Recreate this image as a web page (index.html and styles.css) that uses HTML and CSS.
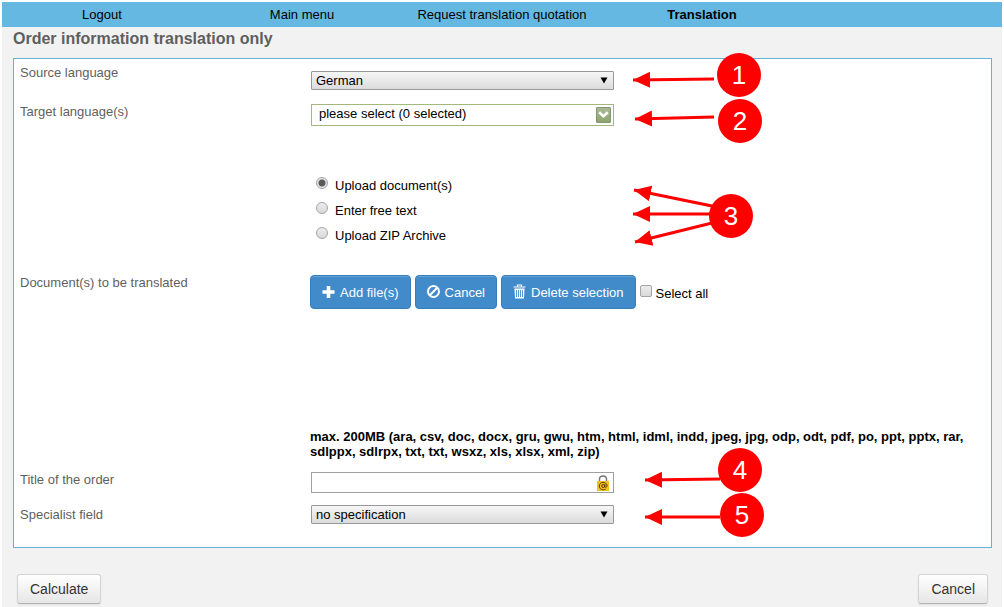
FILE: index.html
```html
<!DOCTYPE html>
<html lang="en">
<head>
    <meta charset="UTF-8">
    <meta name="viewport" content="width=device-width, initial-scale=1.0">
    <title>Order information translation only</title>
    <link rel="stylesheet" href="styles.css">
</head>
<body>
    <div class="page">
        <nav class="menu">
            <a href="#">Logout</a>
            <a href="#">Main menu</a>
            <a href="#">Request translation quotation</a>
            <a href="#" class="active">Translation</a>
        </nav>

        <h1>Order information translation only</h1>

        <form>
            <div class="panel">
                <div class="row row-source">
                    <label class="caption" for="source">Source language</label>
                    <div class="field box">
                        <select id="source">
                            <option>German</option>
                        </select>
                        <svg class="arrow" width="8" height="7" viewBox="0 0 8 7"><path d="M0.5 0.5H7.5L4 6.5Z"/></svg>
                    </div>
                </div>

                <div class="row row-target">
                    <label class="caption" for="target">Target language(s)</label>
                    <div class="field box">
                        <button type="button" id="target" class="multi">
                            <span class="multi-text">please select (0 selected)</span>
                            <span class="multi-icon">
                                <svg width="11" height="8" viewBox="0 0 11 8"><path d="M1.2 1.2L5.5 5.2L9.8 1.2" fill="none" stroke="#fff" stroke-width="2.6"/></svg>
                            </span>
                        </button>
                    </div>
                </div>

                <div class="row row-type">
                    <span class="caption"></span>
                    <div class="field choices">
                        <label><input type="radio" name="type" checked> Upload document(s)</label>
                        <label><input type="radio" name="type"> Enter free text</label>
                        <label><input type="radio" name="type"> Upload ZIP Archive</label>
                    </div>
                </div>

                <div class="row row-docs">
                    <span class="caption">Document(s) to be translated</span>
                    <div class="field">
                        <div class="upload-bar">
                            <button type="button" class="btn-blue">
                                <svg width="13" height="14" viewBox="0 0 13 14"><path d="M4.7 1H8.3V5.2H12.5V8.8H8.3V13H4.7V8.8H0.5V5.2H4.7Z" fill="#fff"/></svg>
                                Add file(s)
                            </button>
                            <button type="button" class="btn-blue">
                                <svg width="13" height="14" viewBox="0 0 13 14"><circle cx="6.5" cy="6.5" r="5.5" fill="none" stroke="#fff" stroke-width="2"/><path d="M2.8 10.2L10.2 2.8" stroke="#fff" stroke-width="2"/></svg>
                                Cancel
                            </button>
                            <button type="button" class="btn-blue">
                                <svg width="13" height="16" viewBox="0 0 13 16"><path d="M4.5 2.5V1H8.5V2.5M0.5 3H12.5" fill="none" stroke="#fff" stroke-width="1.2"/><path d="M1.5 4.5H11.5L11 14.5H2Z" fill="#fff"/><path d="M3.5 6V13M5.5 6V13M7.5 6V13M9.5 6V13" stroke="#428bca" stroke-width="0.9"/></svg>
                                Delete selection
                            </button>
                            <label class="select-all"><input type="checkbox"> <span>Select all</span></label>
                        </div>
                        <p class="note">max. 200MB (ara, csv, doc, docx, gru, gwu, htm, html, idml, indd, jpeg, jpg, odp, odt, pdf, po, ppt, pptx, rar, sdlppx, sdlrpx, txt, txt, wsxz, xls, xlsx, xml, zip)</p>
                    </div>
                </div>

                <div class="row row-title">
                    <label class="caption" for="title">Title of the order</label>
                    <div class="field box">
                        <input type="text" id="title">
                        <svg class="lock" width="12" height="16" viewBox="0 0 12 16">
                            <path d="M2.5 7V4.2C2.5 0 9.5 0 9.5 4.2V7" fill="none" stroke="#777" stroke-width="1.5"/>
                            <rect y="6" width="12" height="10" fill="#f5c21b"/>
                            <circle cx="6.2" cy="11" r="1.5" fill="none" stroke="#4d3b00"/>
                            <path d="M7.9 9.2V11.7C8.4 13 10 12.2 10 10.8C9.8 6.1 2.4 6.2 2.3 11C2.3 14.2 5.6 15.7 8.7 14.1" fill="none" stroke="#4d3b00"/>
                        </svg>
                    </div>
                </div>

                <div class="row">
                    <label class="caption caption-low" for="specialist">Specialist field</label>
                    <div class="field box">
                        <select id="specialist">
                            <option>no specification</option>
                        </select>
                        <svg class="arrow" width="8" height="7" viewBox="0 0 8 7"><path d="M0.5 0.5H7.5L4 6.5Z"/></svg>
                    </div>
                </div>
            </div>

            <div class="actions">
                <button type="submit" class="btn">Calculate</button>
                <button type="button" class="btn">Cancel</button>
            </div>
        </form>
    </div>

    <!-- numbered hints on top of the form -->
    <svg class="hints" width="800" height="560" viewBox="0 0 800 560">
        <defs>
            <marker id="head" markerUnits="userSpaceOnUse" markerWidth="18" markerHeight="18" refX="1" refY="9" orient="auto">
                <path d="M18 1V17L1 9Z" fill="red"/>
            </marker>
        </defs>
        <g class="lines">
            <path d="M633 80L714 79"/>
            <path d="M635 119L714 117"/>
            <path d="M634 190L712 206"/>
            <path d="M633 214H712"/>
            <path d="M635 242L712 223"/>
            <path d="M645 480L720 479"/>
            <path d="M645 517H720"/>
        </g>
        <g fill="red">
            <circle cx="739" cy="75" r="22"/>
            <circle cx="740" cy="121" r="22"/>
            <circle cx="731" cy="216" r="22"/>
            <circle cx="740" cy="470" r="22"/>
            <circle cx="742" cy="515" r="22"/>
        </g>
        <g class="numbers">
            <text x="739" y="84">1</text>
            <text x="740" y="130">2</text>
            <text x="731" y="225">3</text>
            <text x="740" y="479">4</text>
            <text x="742" y="524">5</text>
        </g>
    </svg>
</body>
</html>
```

FILE: styles.css
```css
* {
    box-sizing: border-box;
}
body {
    margin: 0;
    padding: 2px 2px 0;
    background-color: #fff;
    font-family: "Liberation Sans", Arial, sans-serif;
    font-size: 13px;
    line-height: 16px;
    color: #000;
}
button, input, select {
    font-family: inherit;
    font-size: 13px;
    color: #000;
}
.page {
    background-color: #f2f2f2;
}
.menu {
    display: grid;
    grid-template-columns: repeat(5, 1fr);
    background-color: #65b8e1;
}
.menu a {
    padding: 5px 0 4px;
    text-align: center;
    color: #000;
    text-decoration: none;
}
.menu .active {
    font-weight: bold;
}
h1 {
    margin: 0;
    padding: 3px 11px 10px;
    font-size: 16px;
    line-height: 18px;
    color: #5f5f5f;
}
.panel {
    margin: 0 10px 0 11px;
    padding: 6px 6px 23px 5px;
    border: 1px solid #65b3d9;
    background-color: #fff;
}
.row {
    display: grid;
    grid-template-columns: 291px 1fr;
    align-items: start;
}
.caption {
    padding-left: 1px;
    color: #5f5f5f;
}
.caption-low {
    padding-top: 2px;
}
.row-source {
    height: 39px;
}
.row-source .field {
    margin-top: 6px;
}
.row-target {
    height: 69px;
}
.row-type {
    margin-bottom: 27px;
}
.row-docs {
    margin-bottom: 13px;
}
.row-title {
    height: 33px;
}

/* form controls */
.box {
    position: relative;
    width: 303px;
    margin-left: 1px;
}
select {
    display: block;
    width: 100%;
    height: 19px;
    padding: 0 4px;
    border: 1px solid #999;
    border-radius: 1px;
    background: linear-gradient(#f6f6f6, #dcdcdc);
    appearance: none;
}
.arrow {
    position: absolute;
    top: 6px;
    right: 6px;
    pointer-events: none;
}
.multi {
    display: flex;
    justify-content: space-between;
    align-items: center;
    width: 100%;
    height: 22px;
    padding: 0 2px 0 7px;
    border: 1px solid #a3b87e;
    background-color: #fff;
}
.multi-text {
    padding-bottom: 3px;
}
.multi-icon {
    display: flex;
    justify-content: center;
    align-items: center;
    width: 15px;
    height: 16px;
    border: 1px solid #82976d;
    border-radius: 1px;
    background: linear-gradient(#a9b994, #8fa471);
}
input[type="text"] {
    display: block;
    width: 100%;
    height: 21px;
    padding: 0 22px 0 4px;
    border: 1px solid #a0a0a0;
}
.lock {
    position: absolute;
    top: 3px;
    right: 5px;
}
.choices label {
    display: flex;
    height: 25px;
    padding: 5px 6px 0;
    gap: 7px;
}
input[type="radio"], input[type="checkbox"] {
    width: 12px;
    height: 12px;
    margin: 0;
    border: 1px solid #a5a5a5;
    border-radius: 50%;
    background: linear-gradient(#ececec, #d9d9d9);
    appearance: none;
}
.choices input[type="radio"] {
    margin-top: -1px;
}
input[type="radio"]:checked {
    background: radial-gradient(circle, #5a5a5a 3px, #e4e4e4 4px);
}
input[type="checkbox"] {
    border-radius: 2px;
}
.upload-bar {
    display: flex;
    gap: 4px;
    min-height: 154px;
    align-items: flex-start;
}
.btn-blue {
    display: flex;
    align-items: center;
    gap: 5px;
    height: 34px;
    padding: 0 11px;
    border: 1px solid #357ebd;
    border-radius: 4px;
    background-color: #428bca;
    box-shadow: inset 0 1px 0 #65a3d7;
    color: #fff;
}
.select-all {
    display: flex;
    gap: 4px;
    padding-top: 10px;
}
.select-all span {
    padding-top: 1px;
}
.note {
    margin: 0;
    font-weight: bold;
    line-height: 15px;
}
.actions {
    display: flex;
    justify-content: space-between;
    padding: 26px 14px 3px 15px;
}
.btn {
    height: 30px;
    padding: 0 12px;
    border: 1px solid #d4d4d4;
    border-bottom-color: #b3b3b3;
    border-radius: 3px;
    background: linear-gradient(#fff, #e6e6e6);
    box-shadow: 0 1px 2px rgba(0, 0, 0, 0.08);
    font-size: 14px;
    color: #333;
}

/* hints */
.hints {
    position: absolute;
    top: 0;
    left: 0;
    pointer-events: none;
}
.lines path {
    fill: none;
    stroke: red;
    stroke-width: 3px;
    marker-start: url(#head);
}
.numbers text {
    fill: #fff;
    font-size: 26px;
    text-anchor: middle;
}
```
